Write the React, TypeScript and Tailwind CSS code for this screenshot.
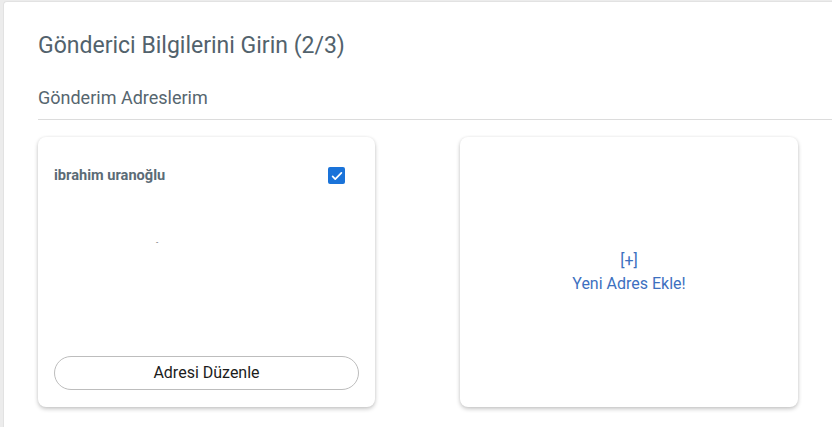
export default function App() {
  return (
    <div className="min-h-[427px] bg-[#ececec] pl-[3px] pt-px font-['Roboto',sans-serif]">
      <div className="min-h-[426px] rounded-tl-[4px] border-l border-t border-[#e2e2e2] bg-white pl-[34px]">
        {/* Başlık */}
        <h2 className="pt-[30px] text-[23px] leading-[28px] text-[#52626c]">
          Gönderici Bilgilerini Girin (2/3)
        </h2>
        <h3 className="mt-[27px] text-[18px] leading-[22px] text-[#56666f]">Gönderim Adreslerim</h3>
        <div className="mt-[10px] h-px bg-[#dcdcdc]" />

        {/* Adres kartları */}
        <div className="mt-[17px] flex gap-[85px]">
          <div className="flex h-[270px] w-[337px] flex-col rounded-lg bg-white px-4 pb-[17px] shadow-[0_2px_4px_rgba(0,0,0,0.22),0_0_3px_rgba(0,0,0,0.06)]">
            <div className="mt-[28px] flex items-center justify-between pr-[14px]">
              <span className="text-[14.6px] font-bold text-[#5b6b76]">ibrahim uranoğlu</span>
              <span className="flex h-[17px] w-[17px] items-center justify-center rounded-[2px] bg-[#1a73d9]">
                <svg viewBox="0 0 16 16" className="h-[14px] w-[14px]" fill="none" stroke="white" strokeWidth={2}>
                  <path d="M3 8.5l3 3 7-7" strokeLinecap="round" strokeLinejoin="round" />
                </svg>
              </span>
            </div>
            <div className="mt-[52px] pl-[102px] text-[8px] leading-none text-[#555]">-</div>
            <button className="mt-auto h-[34px] w-full rounded-full border border-[#bdbdbd] bg-white text-[16px] text-[#1c1c1c]">
              Adresi Düzenle
            </button>
          </div>

          <div className="flex h-[270px] w-[338px] flex-col items-center justify-center rounded-lg bg-white text-[16px] leading-[23px] text-[#3d70bf] shadow-[0_2px_4px_rgba(0,0,0,0.22),0_0_3px_rgba(0,0,0,0.06)]">
            <span>[+]</span>
            <span>Yeni Adres Ekle!</span>
          </div>
        </div>
      </div>
    </div>
  )
}
